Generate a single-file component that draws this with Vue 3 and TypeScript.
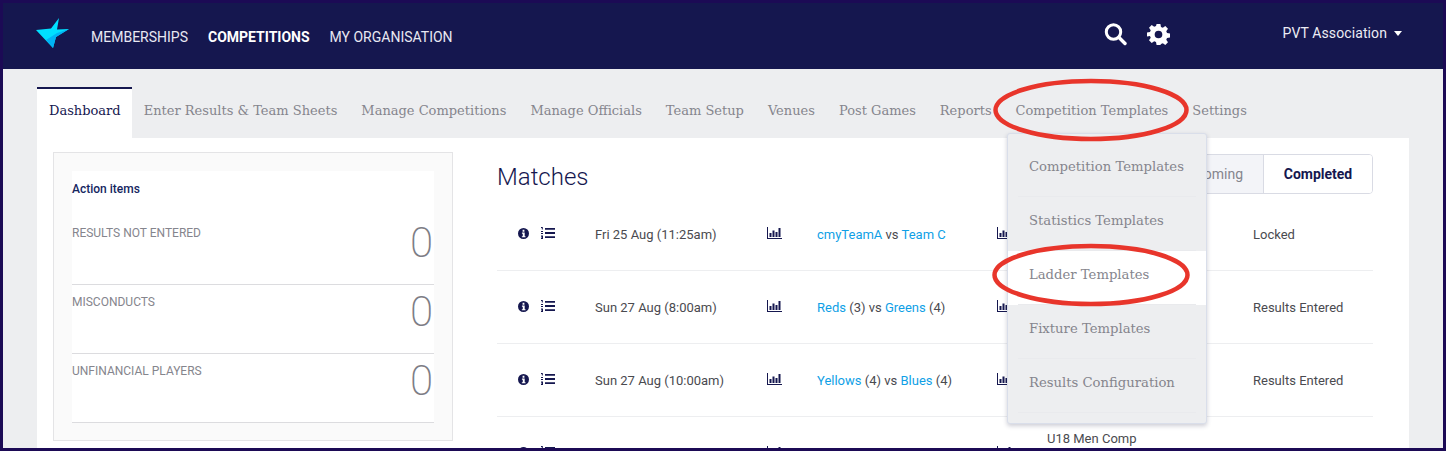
<template>
  <div class="frame">
    <header class="top-bar">
      <svg class="logo" width="34" height="32" viewBox="0 0 34 32">
        <polygon points="0,13 15,11.500 23,1 21,12.500 33,12 20,20 17,31" fill="#00e0ff" />
        <polygon points="17,31 20,20 33,12 21,16 10,23" fill="#00b4f5" />
      </svg>
      <nav class="main-nav">
        <a v-for="item in mainNav" :key="item.label" :class="{ active: item.active }">{{ item.label }}</a>
      </nav>
      <div class="top-icons">
        <svg width="24" height="24" viewBox="0 0 24 24" fill="none" stroke="#fff">
          <circle cx="10.5" cy="10" r="7.2" stroke-width="3" />
          <path d="M16 15.5l6 6" stroke-width="3.4" stroke-linecap="round" />
        </svg>
        <svg width="23" height="23" viewBox="0 0 24 24">
          <path fill="#fff" fill-rule="evenodd" d="M10 1h4l.6 3.1 1.9.8 2.6-1.8 2.8 2.8-1.8 2.6.8 1.9 3.1.6v4l-3.1.6-.8 1.9 1.8 2.6-2.8 2.8-2.6-1.8-1.9.8L14 23h-4l-.6-3.1-1.9-.8-2.6 1.8-2.8-2.8 1.8-2.6-.8-1.9L0 14v-4l3.1-.6.8-1.9L2.100 4.900l2.800-2.800 2.600 1.800 1.900-.8zM12 8a4 4 0 1 0 0 8 4 4 0 0 0 0-8z" />
        </svg>
      </div>
      <div class="account">PVT Association <span class="caret"></span></div>
    </header>

    <main class="content">
      <div class="tabs">
        <a v-for="(tab, i) in tabs" :key="tab" class="tab" :class="{ active: i === 0 }">{{ tab }}</a>
      </div>

      <section class="panel">
        <aside class="action-card">
          <div class="action-inner">
            <h4>Action items</h4>
            <div v-for="item in actionItems" :key="item" class="action-row">
              <span>{{ item }}</span>
              <strong>0</strong>
            </div>
          </div>
        </aside>

        <div class="matches">
          <div class="matches-head">
            <h2>Matches</h2>
            <div class="switch">
              <button>Upcoming</button>
              <button class="on">Completed</button>
            </div>
          </div>
          <div v-for="(m, i) in matches" :key="i" class="match-row">
            <div class="row-icons">
              <svg width="11" height="11" viewBox="0 0 12 12">
                <path fill="#15174f" fill-rule="evenodd" d="M6 0a6 6 0 1 0 0 12A6 6 0 0 0 6 0zM5 2h2v2H5zM4.300 5h3v4h.9v1.200H4.200V9h1V6.200h-.9z" />
              </svg>
              <svg width="14" height="12" viewBox="0 0 14 12">
                <path fill="#15174f" d="M4 1h10v1.800H4zM4 5.100h10v1.800H4zM4 9.200h10V11H4z" />
                <path fill="#15174f" d="M0 0h1.800v2.600H.8V1H0zM0 4h2v1H0zM0 6h2v1H0zM0 8.500h2v3.500H0V11h1v-.5H0v-1h1V9.300H0z" />
              </svg>
            </div>
            <span class="date">{{ m.date }}</span>
            <svg class="chart" width="15" height="12" viewBox="0 0 15 12">
              <path fill="#15174f" d="M0 0h1v11h14v1H0zM2.500 6h2v4h-2zM5.500 3.500h2V10h-2zM8.500 5h2v5h-2zM11.500 1h2v9h-2z" />
            </svg>
            <span class="teams">
              <template v-if="m.home">
                <a>{{ m.home }}</a><template v-if="m.homeScore"> ({{ m.homeScore }})</template> vs
                <a>{{ m.away }}</a><template v-if="m.awayScore"> ({{ m.awayScore }})</template>
              </template>
            </span>
            <svg class="chart" width="15" height="12" viewBox="0 0 15 12">
              <path fill="#15174f" d="M0 0h1v11h14v1H0zM2.500 6h2v4h-2zM5.500 3.500h2V10h-2zM8.500 5h2v5h-2zM11.500 1h2v9h-2z" />
            </svg>
            <span class="comp">{{ m.comp }}</span>
            <span class="status">{{ m.status }}</span>
          </div>
        </div>
      </section>
    </main>

    <div class="dropdown">
      <a v-for="(d, i) in dropdown" :key="d" :class="{ hover: i === 2 }">{{ d }}</a>
    </div>

    <svg class="ring ring-top" width="198" height="64" viewBox="0 0 198 64">
      <ellipse cx="99" cy="32" rx="95.500" ry="29" />
    </svg>
    <svg class="ring ring-low" width="200" height="66" viewBox="0 0 200 66">
      <ellipse cx="100" cy="33" rx="96.500" ry="29" />
    </svg>
  </div>
</template>

<script setup lang="ts">
interface Match {
  date?: string
  home?: string
  away?: string
  homeScore?: number
  awayScore?: number
  comp?: string
  status?: string
}

const mainNav = [
  { label: 'MEMBERSHIPS', active: false },
  { label: 'COMPETITIONS', active: true },
  { label: 'MY ORGANISATION', active: false },
]

const tabs = [
  'Dashboard',
  'Enter Results & Team Sheets',
  'Manage Competitions',
  'Manage Officials',
  'Team Setup',
  'Venues',
  'Post Games',
  'Reports',
  'Competition Templates',
  'Settings',
]

const actionItems = ['RESULTS NOT ENTERED', 'MISCONDUCTS', 'UNFINANCIAL PLAYERS']

const dropdown = [
  'Competition Templates',
  'Statistics Templates',
  'Ladder Templates',
  'Fixture Templates',
  'Results Configuration',
]

// last row is cut off by the window, only its top shows
const matches: Match[] = [
  { date: 'Fri 25 Aug (11:25am)', home: 'cmyTeamA', away: 'Team C', status: 'Locked' },
  { date: 'Sun 27 Aug (8:00am)', home: 'Reds', homeScore: 3, away: 'Greens', awayScore: 4, status: 'Results Entered' },
  { date: 'Sun 27 Aug (10:00am)', home: 'Yellows', homeScore: 4, away: 'Blues', awayScore: 4, status: 'Results Entered' },
  { comp: 'U18 Men Comp' },
]
</script>

<style>
html,
body {
  margin: 0;
  overflow: hidden;
}
</style>

<style scoped>
.frame {
  position: relative;
  width: 1446px;
  height: 451px;
  box-sizing: border-box;
  border: 3px solid #1c0a55;
  background: #edeef0;
  overflow: hidden;
  font-family: Roboto, "Liberation Sans", sans-serif;
  color: #4a4a4f;
}

.top-bar {
  display: flex;
  align-items: center;
  height: 66px;
  background: #15174f;
  color: #fff;
  padding-left: 33px;
}

.logo {
  flex-shrink: 0;
  margin-top: -6px;
}

.main-nav {
  display: flex;
  gap: 20px;
  margin-left: 21px;
  font-size: 14px;
  padding-top: 2px;
}

.main-nav a {
  color: #e8e8f2;
}

.main-nav a.active {
  color: #fff;
  font-weight: 700;
}

.top-icons {
  display: flex;
  align-items: center;
  gap: 20px;
  margin-left: 650px;
  margin-top: -4px;
}

.account {
  margin-left: 113px;
  margin-top: -6px;
  font-size: 14px;
  letter-spacing: 0.1px;
  color: #ececf4;
}

.caret {
  display: inline-block;
  width: 0;
  height: 0;
  margin-left: 3px;
  vertical-align: 2px;
  border: 4px solid transparent;
  border-top: 5px solid #fff;
  border-bottom: 0;
}

.content {
  padding: 18px 34px 0;
}

.tabs {
  display: flex;
  height: 51px;
  font-family: "DejaVu Serif", serif;
  font-size: 13px;
}

.tab {
  padding: 0 12px;
  line-height: 48px;
  color: #85858d;
  white-space: nowrap;
}

.tab.active {
  background: #fff;
  border-top: 2px solid #15174f;
  line-height: 44px;
  padding-right: 11px;
  color: #15174f;
}

.panel {
  display: flex;
  width: 1372px;
  height: 320px;
  background: #fff;
  padding: 14px 0 0 16px;
  box-sizing: border-box;
}

.action-card {
  width: 400px;
  height: 289px;
  box-sizing: border-box;
  flex-shrink: 0;
  padding: 18px;
  border: 1px solid #e4e4e6;
  background: #fafafa;
}

.action-inner {
  background: #fff;
}

.action-inner h4 {
  margin: 0;
  padding-top: 11px;
  height: 34px;
  font-size: 12px;
  font-weight: 500;
  color: #15265f;
}

.action-row {
  display: flex;
  justify-content: space-between;
  height: 68px;
  border-bottom: 1px solid #dcdcdf;
  font-size: 12px;
  color: #85858d;
}

.action-row span {
  padding-top: 10px;
}

.action-row strong {
  margin-top: 5px;
  font-size: 42px;
  font-weight: 200;
  line-height: 44px;
  color: #7d7d85;
  padding-right: 1px;
}

.matches {
  flex: 1;
  margin-left: 44px;
  margin-right: 36px;
}

.matches-head {
  display: flex;
  justify-content: space-between;
  height: 46px;
}

.matches-head h2 {
  margin: 11px 0 0;
  font-size: 24px;
  font-weight: 300;
  color: #15174f;
}

.switch {
  display: flex;
  margin-top: 2px;
  height: 40px;
  border: 1px solid #d9dbe4;
  border-radius: 4px;
  box-sizing: border-box;
  overflow: hidden;
}

.switch button {
  border: 0;
  padding: 0 20px;
  background: #f3f4f8;
  font: 400 14px Roboto, sans-serif;
  color: #85858d;
}

.switch button.on {
  width: 109px;
  padding: 0;
  background: #fff;
  border-left: 1px solid #d9dbe4;
  font-weight: 700;
  color: #15174f;
}

.match-row {
  display: grid;
  grid-template-columns: 98px 172px 50px 180px 50px 206px 120px;
  align-items: center;
  height: 72px;
  border-bottom: 1px solid #edeef0;
  font-size: 13px;
}

.row-icons {
  display: flex;
  align-items: center;
  gap: 12px;
  padding-left: 21px;
  margin-top: -2px;
}

.chart {
  margin-top: -2px;
}

.teams a {
  color: #0f9fe6;
}

.comp {
  align-self: start;
  padding-top: 14px;
}

.dropdown {
  position: absolute;
  top: 130px;
  left: 1004px;
  width: 200px;
  height: 291px;
  box-sizing: border-box;
  padding-top: 9px;
  border: 1px solid #d9deea;
  border-radius: 3px;
  background: #edeef0;
  box-shadow: 0 2px 4px rgba(60, 60, 90, 0.25);
  font-family: "DejaVu Serif", serif;
  font-size: 13.200px;
}

.dropdown a {
  position: relative;
  display: block;
  height: 54px;
  line-height: 48px;
  padding-left: 21px;
  color: #85858d;
  box-sizing: border-box;
  white-space: nowrap;
}

.dropdown a::after {
  content: "";
  position: absolute;
  left: 10px;
  right: 10px;
  bottom: 0;
  height: 1px;
  background: #e9eaed;
}

.dropdown a.hover {
  background: #fff;
}

.ring {
  position: absolute;
  fill: none;
  stroke: #e8352b;
  stroke-width: 4.500;
}

.ring-top {
  left: 989px;
  top: 75px;
}

.ring-low {
  left: 988px;
  top: 239px;
}
</style>
